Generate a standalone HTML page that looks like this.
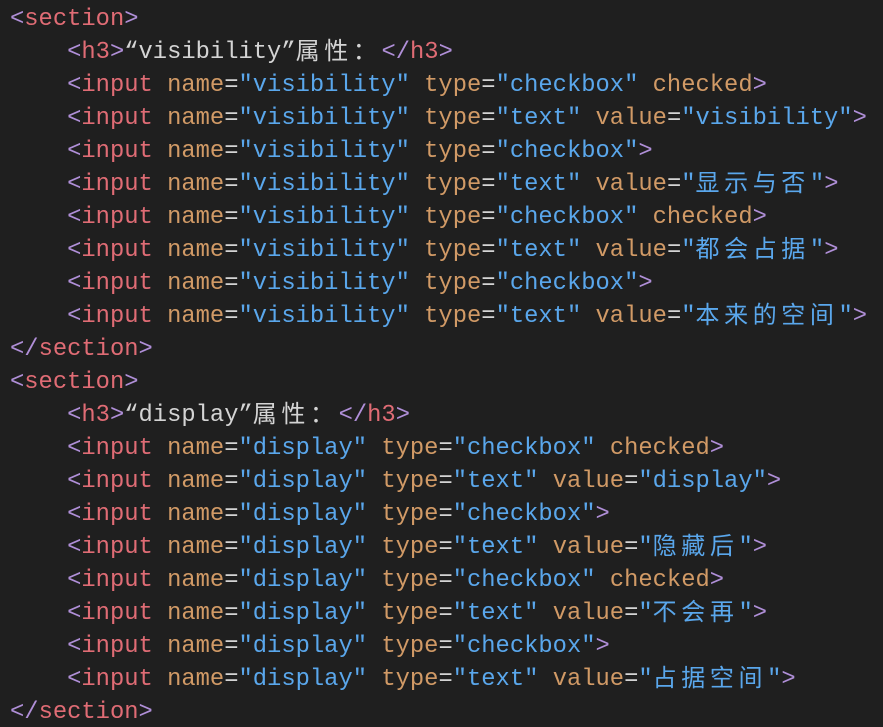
<!DOCTYPE html>
<html><head><meta charset="utf-8"><style>
html,body{margin:0;background:#1f1f1f;width:883px;height:727px;overflow:hidden}
pre{margin:0;padding:3px 0 0 10px;font-family:"Liberation Mono","Noto Sans CJK SC",monospace;font-size:23.8px;line-height:33px;color:#d4d4d4;white-space:pre}
.b{color:#b08fd8}.t{color:#e06c75}.a{color:#d19a66}.s{color:#5aa7ec}
.c{display:inline-block;height:33px;line-height:33px;vertical-align:top;position:relative;top:-4px;font-family:"Noto Sans CJK SC",sans-serif;font-size:24px;letter-spacing:4.6px}
</style></head><body><pre><span class="b">&lt;</span><span class="t">section</span><span class="b">&gt;</span>
    <span class="b">&lt;</span><span class="t">h3</span><span class="b">&gt;</span>“visibility”<span class="c">属性：</span><span class="b">&lt;/</span><span class="t">h3</span><span class="b">&gt;</span>
    <span class="b">&lt;</span><span class="t">input</span> <span class="a">name</span>=<span class="s">"visibility"</span> <span class="a">type</span>=<span class="s">"checkbox"</span> <span class="a">checked</span><span class="b">&gt;</span>
    <span class="b">&lt;</span><span class="t">input</span> <span class="a">name</span>=<span class="s">"visibility"</span> <span class="a">type</span>=<span class="s">"text"</span> <span class="a">value</span>=<span class="s">"visibility"</span><span class="b">&gt;</span>
    <span class="b">&lt;</span><span class="t">input</span> <span class="a">name</span>=<span class="s">"visibility"</span> <span class="a">type</span>=<span class="s">"checkbox"</span><span class="b">&gt;</span>
    <span class="b">&lt;</span><span class="t">input</span> <span class="a">name</span>=<span class="s">"visibility"</span> <span class="a">type</span>=<span class="s">"text"</span> <span class="a">value</span>=<span class="s">"<span class="c">显示与否</span>"</span><span class="b">&gt;</span>
    <span class="b">&lt;</span><span class="t">input</span> <span class="a">name</span>=<span class="s">"visibility"</span> <span class="a">type</span>=<span class="s">"checkbox"</span> <span class="a">checked</span><span class="b">&gt;</span>
    <span class="b">&lt;</span><span class="t">input</span> <span class="a">name</span>=<span class="s">"visibility"</span> <span class="a">type</span>=<span class="s">"text"</span> <span class="a">value</span>=<span class="s">"<span class="c">都会占据</span>"</span><span class="b">&gt;</span>
    <span class="b">&lt;</span><span class="t">input</span> <span class="a">name</span>=<span class="s">"visibility"</span> <span class="a">type</span>=<span class="s">"checkbox"</span><span class="b">&gt;</span>
    <span class="b">&lt;</span><span class="t">input</span> <span class="a">name</span>=<span class="s">"visibility"</span> <span class="a">type</span>=<span class="s">"text"</span> <span class="a">value</span>=<span class="s">"<span class="c">本来的空间</span>"</span><span class="b">&gt;</span>
<span class="b">&lt;/</span><span class="t">section</span><span class="b">&gt;</span>
<span class="b">&lt;</span><span class="t">section</span><span class="b">&gt;</span>
    <span class="b">&lt;</span><span class="t">h3</span><span class="b">&gt;</span>“display”<span class="c">属性：</span><span class="b">&lt;/</span><span class="t">h3</span><span class="b">&gt;</span>
    <span class="b">&lt;</span><span class="t">input</span> <span class="a">name</span>=<span class="s">"display"</span> <span class="a">type</span>=<span class="s">"checkbox"</span> <span class="a">checked</span><span class="b">&gt;</span>
    <span class="b">&lt;</span><span class="t">input</span> <span class="a">name</span>=<span class="s">"display"</span> <span class="a">type</span>=<span class="s">"text"</span> <span class="a">value</span>=<span class="s">"display"</span><span class="b">&gt;</span>
    <span class="b">&lt;</span><span class="t">input</span> <span class="a">name</span>=<span class="s">"display"</span> <span class="a">type</span>=<span class="s">"checkbox"</span><span class="b">&gt;</span>
    <span class="b">&lt;</span><span class="t">input</span> <span class="a">name</span>=<span class="s">"display"</span> <span class="a">type</span>=<span class="s">"text"</span> <span class="a">value</span>=<span class="s">"<span class="c">隐藏后</span>"</span><span class="b">&gt;</span>
    <span class="b">&lt;</span><span class="t">input</span> <span class="a">name</span>=<span class="s">"display"</span> <span class="a">type</span>=<span class="s">"checkbox"</span> <span class="a">checked</span><span class="b">&gt;</span>
    <span class="b">&lt;</span><span class="t">input</span> <span class="a">name</span>=<span class="s">"display"</span> <span class="a">type</span>=<span class="s">"text"</span> <span class="a">value</span>=<span class="s">"<span class="c">不会再</span>"</span><span class="b">&gt;</span>
    <span class="b">&lt;</span><span class="t">input</span> <span class="a">name</span>=<span class="s">"display"</span> <span class="a">type</span>=<span class="s">"checkbox"</span><span class="b">&gt;</span>
    <span class="b">&lt;</span><span class="t">input</span> <span class="a">name</span>=<span class="s">"display"</span> <span class="a">type</span>=<span class="s">"text"</span> <span class="a">value</span>=<span class="s">"<span class="c">占据空间</span>"</span><span class="b">&gt;</span>
<span class="b">&lt;/</span><span class="t">section</span><span class="b">&gt;</span></pre></body></html>
